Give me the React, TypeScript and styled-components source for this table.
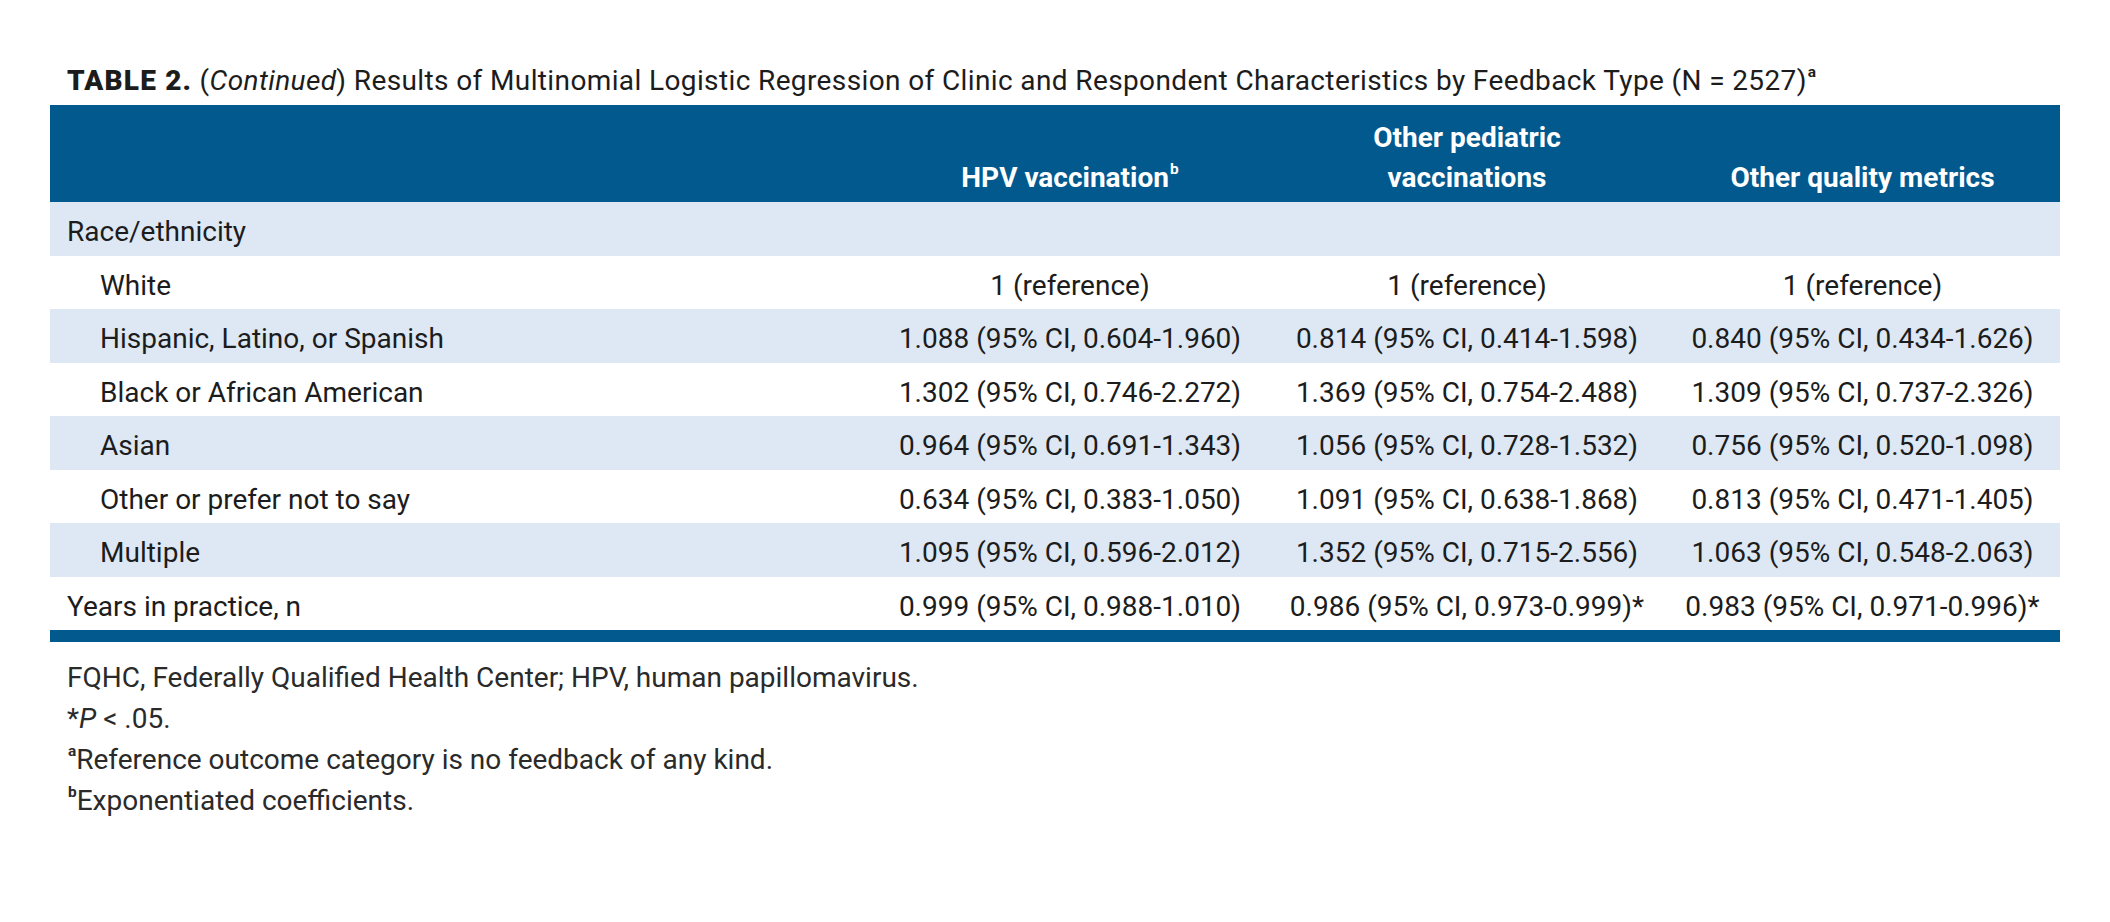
import styled, { createGlobalStyle } from "styled-components"

const GlobalStyle = createGlobalStyle`
    html, body {
        margin: 0;
        padding: 0;
        background: #ffffff;
    }
    body {
        font-family: Roboto, "Liberation Sans", sans-serif;
        color: #1c1c1c;
    }
`

type Row = {
    label: string
    indent?: boolean
    shaded?: boolean
    values: string[]
}

const rows: Row[] = [
    { label: 'Race/ethnicity', shaded: true, values: ['', '', ''] },
    { label: 'White', indent: true, values: ['1 (reference)', '1 (reference)', '1 (reference)'] },
    { label: 'Hispanic, Latino, or Spanish', indent: true, shaded: true, values: ['1.088 (95% CI, 0.604-1.960)', '0.814 (95% CI, 0.414-1.598)', '0.840 (95% CI, 0.434-1.626)'] },
    { label: 'Black or African American', indent: true, values: ['1.302 (95% CI, 0.746-2.272)', '1.369 (95% CI, 0.754-2.488)', '1.309 (95% CI, 0.737-2.326)'] },
    { label: 'Asian', indent: true, shaded: true, values: ['0.964 (95% CI, 0.691-1.343)', '1.056 (95% CI, 0.728-1.532)', '0.756 (95% CI, 0.520-1.098)'] },
    { label: 'Other or prefer not to say', indent: true, values: ['0.634 (95% CI, 0.383-1.050)', '1.091 (95% CI, 0.638-1.868)', '0.813 (95% CI, 0.471-1.405)'] },
    { label: 'Multiple', indent: true, shaded: true, values: ['1.095 (95% CI, 0.596-2.012)', '1.352 (95% CI, 0.715-2.556)', '1.063 (95% CI, 0.548-2.063)'] },
    { label: 'Years in practice, n', values: ['0.999 (95% CI, 0.988-1.010)', '0.986 (95% CI, 0.973-0.999)*', '0.983 (95% CI, 0.971-0.996)*'] },
]

export default function App () {
    return (
        <Page>
            <GlobalStyle />
            <Title>
                <TableNo>TABLE 2.</TableNo> (<em>Continued</em>) Results of Multinomial Logistic Regression of Clinic and Respondent Characteristics by Feedback Type (N = 2527)<Sup>a</Sup>
            </Title>

            <Table>
                <colgroup>
                    <col style={{ width: 821 }} />
                    <col style={{ width: 398 }} />
                    <col style={{ width: 396 }} />
                    <col style={{ width: 395 }} />
                </colgroup>
                <thead>
                    <tr>
                        <HeadCell />
                        <HeadCell>HPV vaccination<Sup>b</Sup></HeadCell>
                        <HeadCell>Other pediatric<br />vaccinations</HeadCell>
                        <HeadCell>Other quality metrics</HeadCell>
                    </tr>
                </thead>
                <tbody>
                    {rows.map((row, idx) => (
                        <BodyRow key={row.label} $shaded={row.shaded} $tall={idx % 2 === 0}>
                            <LabelCell $indent={row.indent}>{row.label}</LabelCell>
                            {row.values.map((v, i) => (
                                <ValueCell key={i}>{v}</ValueCell>
                            ))}
                        </BodyRow>
                    ))}
                </tbody>
            </Table>

            <Notes>
                <p>FQHC, Federally Qualified Health Center; HPV, human papillomavirus.</p>
                <p>*<em>P</em> &lt; .05.</p>
                <p><Sup>a</Sup>Reference outcome category is no feedback of any kind.</p>
                <p><Sup>b</Sup>Exponentiated coefficients.</p>
            </Notes>
        </Page>
    )
}

const Page = styled.div`
    width: 2010px;
    padding: 64px 50px 0 50px;
`

const Title = styled.div`
    font-size: 28px;
    line-height: 34px;
    padding-left: 17px;
    margin-bottom: 7px;
    white-space: nowrap;
    letter-spacing: 0.38px;
    color: #1c1c1c;

    & em {
        font-style: italic;
    }
`

const TableNo = styled.span`
    font-weight: 900;
    letter-spacing: 1.2px;
`

const Sup = styled.sup`
    font-size: 0.55em;
    font-weight: 700;
    line-height: 0;
    vertical-align: baseline;
    position: relative;
    top: -0.85em;
    margin-left: 1px;
`

const Table = styled.table`
    width: 2010px;
    border-collapse: separate;
    border-spacing: 0;
    table-layout: fixed;
    border-bottom: 12px solid #02598e;
`

const HeadCell = styled.th`
    background: #02598e;
    color: #ffffff;
    font-size: 28px;
    font-weight: 700;
    line-height: 40px;
    height: 97px;
    padding: 13px 0 4px 0;
    box-sizing: border-box;
    text-align: center;
    vertical-align: bottom;
`

const BodyRow = styled.tr<{ $shaded?: boolean; $tall?: boolean }>`
    height: ${(props) => props.$tall ? '54px' : '53px'};
    background: ${(props) => props.$shaded ? '#dde8f4' : '#ffffff'};
`

const LabelCell = styled.td<{ $indent?: boolean }>`
    font-size: 28px;
    line-height: 34px;
    padding: 6px 0 0 ${(props) => props.$indent ? '50px' : '17px'};
    white-space: nowrap;
`

const ValueCell = styled.td`
    font-size: 28px;
    line-height: 34px;
    text-align: center;
    white-space: nowrap;
    padding: 6px 0 0 0;
`

const Notes = styled.div`
    margin-top: 15px;
    padding-left: 17px;
    font-size: 28px;
    line-height: 41px;
    color: #2a2a2a;

    & p {
        margin: 0;
    }
`
